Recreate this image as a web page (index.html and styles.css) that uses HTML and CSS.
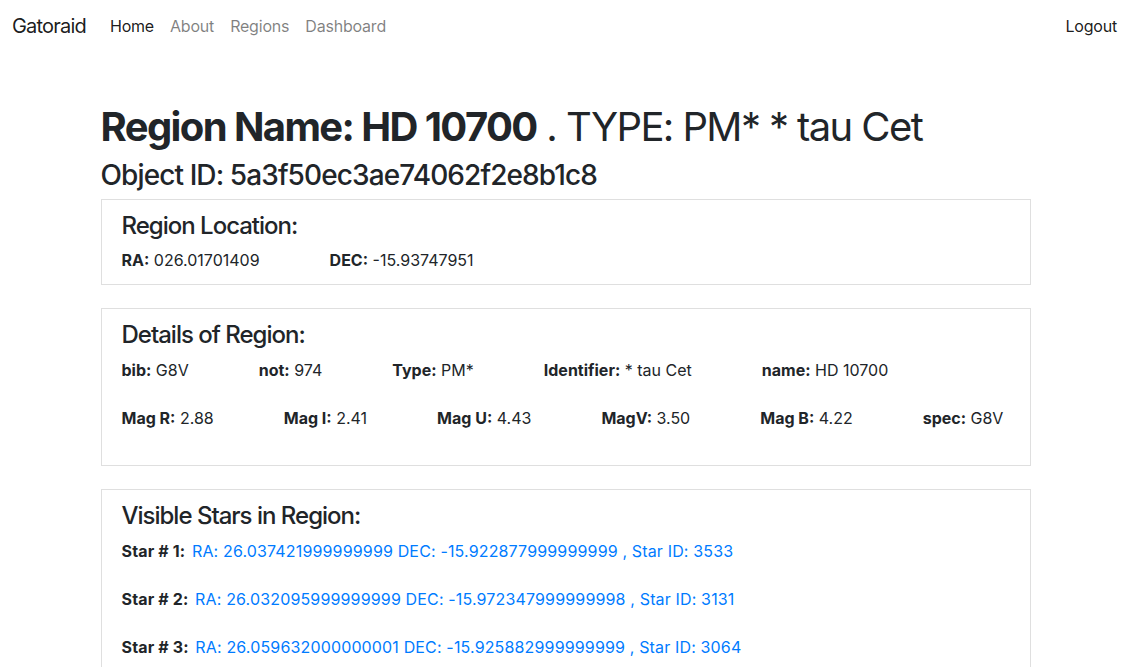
FILE: index.html
```html
<!DOCTYPE html>
<html lang="en">
<head>
    <meta charset="UTF-8">
    <meta name="viewport" content="width=device-width, initial-scale=1.0">
    <title>Gatoraid - Region</title>
    <link rel="stylesheet" href="styles.css">
</head>
<body>
    <nav class="navbar">
        <a class="brand" href="#">Gatoraid</a>
        <ul class="nav-links">
            <li><a class="nav-link active" href="#">Home</a></li>
            <li><a class="nav-link" href="#">About</a></li>
            <li><a class="nav-link" href="#">Regions</a></li>
            <li><a class="nav-link" href="#">Dashboard</a></li>
        </ul>
        <a class="nav-link active" href="#">Logout</a>
    </nav>

    <div class="container">
        <h1 class="region-title"><b>Region Name: HD 10700</b> . TYPE: PM* * tau Cet</h1>
        <h3 class="object-id">Object ID: 5a3f50ec3ae74062f2e8b1c8</h3>

        <div class="card">
            <h4>Region Location:</h4>
            <div class="fields">
                <span><b>RA:</b> 026.01701409</span>
                <span><b>DEC:</b> -15.93747951</span>
            </div>
        </div>

        <div class="card card-details">
            <h4>Details of Region:</h4>
            <div class="fields">
                <span><b>bib:</b> G8V</span>
                <span><b>not:</b> 974</span>
                <span><b>Type:</b> PM*</span>
                <span><b>Identifier:</b> * tau Cet</span>
                <span><b>name:</b> HD 10700</span>
            </div>
            <div class="fields">
                <span><b>Mag R:</b> 2.88</span>
                <span><b>Mag I:</b> 2.41</span>
                <span><b>Mag U:</b> 4.43</span>
                <span><b>MagV:</b> 3.50</span>
                <span><b>Mag B:</b> 4.22</span>
                <span><b>spec:</b> G8V</span>
            </div>
        </div>

        <div class="card card-stars">
            <h4>Visible Stars in Region:</h4>
            <p class="star"><b>Star # 1:</b> <a href="#">RA: 26.037421999999999 DEC: -15.922877999999999 , Star ID: 3533</a></p>
            <p class="star"><b>Star # 2:</b> <a href="#">RA: 26.032095999999999 DEC: -15.972347999999998 , Star ID: 3131</a></p>
            <p class="star"><b>Star # 3:</b> <a href="#">RA: 26.059632000000001 DEC: -15.925882999999999 , Star ID: 3064</a></p>
        </div>
    </div>
</body>
</html>
```

FILE: styles.css
```css
body {
    font-family: 'Inter', 'Helvetica Neue', Arial, sans-serif;
    font-size: 16px;
    line-height: 1.5;
    color: #212529;
    background: #fff;
    margin: 0;
    padding: 0;
}
a {
    text-decoration: none;
}
.navbar {
    display: flex;
    align-items: center;
    padding: 6px 8px 10px 12px;
}
.brand {
    font-size: 20px;
    line-height: 30px;
    letter-spacing: -0.8px;
    padding: 5px 0;
    margin-right: 16px;
    color: rgba(0, 0, 0, 0.9);
}
.nav-links {
    display: flex;
    list-style: none;
    margin: 0;
    padding: 0;
    flex: 1;
}
.nav-link {
    display: block;
    padding: 8px;
    letter-spacing: -0.2px;
    color: rgba(0, 0, 0, 0.5);
}
.nav-link.active {
    color: rgba(0, 0, 0, 0.9);
}
.container {
    width: 930px;
    margin: 47px auto 0;
    position: relative;
    left: -1px;
}
.region-title {
    font-size: 40px;
    font-weight: 400;
    line-height: 1.2;
    letter-spacing: -1.6px;
    margin: 0 0 8px;
}
.region-title b {
    font-weight: 700;
}
.object-id {
    font-size: 28px;
    font-weight: 500;
    line-height: 1.2;
    letter-spacing: -0.9px;
    margin: 0 0 6px;
}
.card {
    border: 1px solid rgba(0, 0, 0, 0.125);
    padding: 12px 20px;
    margin-bottom: 23px;
}
.card h4 {
    font-size: 24px;
    font-weight: 500;
    line-height: 1.2;
    letter-spacing: -1px;
    margin: 0 0 8px;
}
.fields {
    display: flex;
    gap: 70px;
}
.card-details .fields {
    margin-bottom: 24px;
}
.card-details .fields:last-child {
    margin-bottom: 23px;
}
.star {
    margin: 0 0 24px;
    letter-spacing: 0.15px;
}
.star b {
    margin-right: 2px;
}
.star a {
    color: #007bff;
}
```
